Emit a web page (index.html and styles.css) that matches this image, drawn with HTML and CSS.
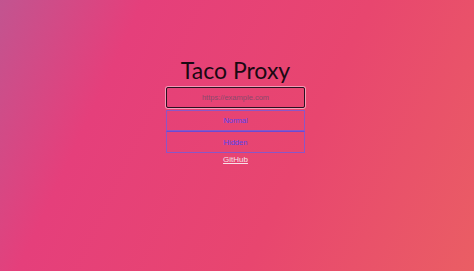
FILE: index.html
```html
<!DOCTYPE html>
<html lang="en">
<head>
<meta charset="utf-8">
<title>Taco Proxy</title>
<link rel="stylesheet" href="styles.css">
</head>
<body>
<main class="page">
  <h1 class="title">Taco Proxy</h1>
  <input class="url" type="text" placeholder="https://example.com">
  <div class="buttons">
    <button class="btn">Normal</button>
    <button class="btn">Hidden</button>
  </div>
  <a class="link" href="#">GitHub</a>
</main>
</body>
</html>
```
FILE: styles.css
```css
html, body {
  margin: 0;
  height: 100%;
}
body {
  background: linear-gradient(115deg, #c25490 0%, #e53f7b 24%, #e8466f 62%, #ea5e64 100%);
  font-family: "Liberation Sans", Arial, sans-serif;
}
.page {
  display: flex;
  flex-direction: column;
  align-items: center;
  padding-top: 57px;
  padding-right: 3px;
}
.title {
  margin: 0 0 3px;
  font-family: Lato, "Noto Sans", sans-serif;
  font-weight: 400;
  font-size: 23px;
  line-height: 27px;
  color: #1a0912;
}
.url {
  box-sizing: border-box;
  width: 139px;
  height: 21px;
  margin: 0;
  padding: 0;
  border: 1px solid #2a1121;
  border-radius: 2px;
  box-shadow: 0 0 0 1px rgba(255, 225, 235, 0.55);
  background: transparent;
  text-align: center;
  font-family: "Liberation Sans", Arial, sans-serif;
  font-size: 7.5px;
  outline: none;
}
.url::placeholder {
  color: #8a4a6c;
}
.buttons {
  display: flex;
  flex-direction: column;
  margin-top: 2px;
}
.btn {
  box-sizing: border-box;
  width: 139px;
  height: 21px;
  margin: 0;
  padding: 0;
  border: 1px solid #8c56c6;
  background: transparent;
  color: #5544ee;
  font-family: "Liberation Sans", Arial, sans-serif;
  font-size: 7.5px;
}
.btn + .btn {
  border-top-color: #6c4ad4;
  height: 22px;
}
.link {
  margin-top: 2px;
  color: #f8e2ea;
  font-size: 8px;
  line-height: 10px;
}
```
